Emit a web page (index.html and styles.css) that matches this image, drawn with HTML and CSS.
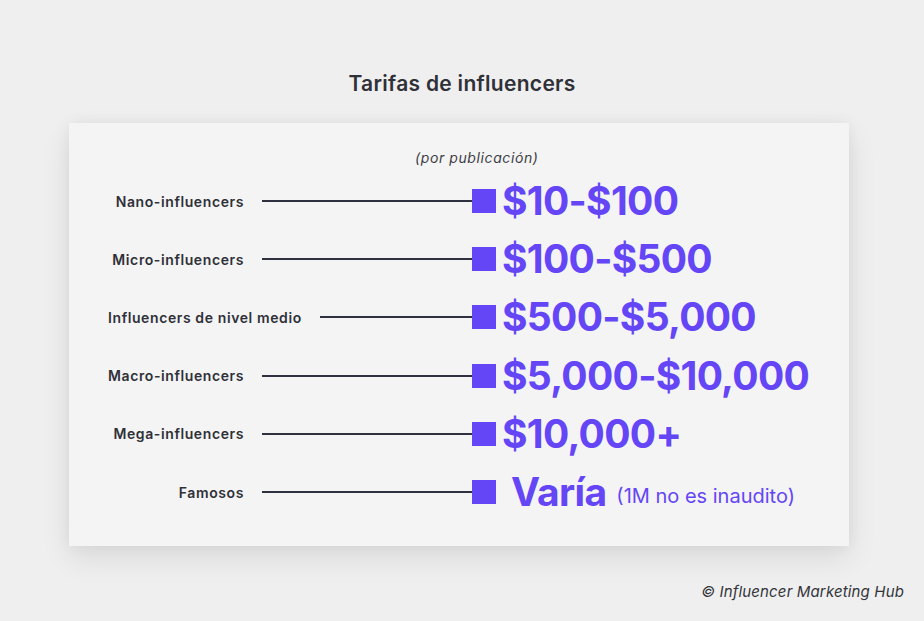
FILE: index.html
```html
<!DOCTYPE html>
<html lang="es">
<head>
<meta charset="utf-8">
<link rel="stylesheet" href="styles.css">
</head>
<body>
<div class="page">
  <h1 class="title">Tarifas de influencers</h1>
  <div class="card">
    <div class="subtitle">(por publicación)</div>
    <div class="rows">
      <div class="row"><div class="lead"><span class="label">Nano-influencers</span><span class="line"></span></div><span class="sq"></span><span class="price">$10-$100</span></div>
      <div class="row"><div class="lead"><span class="label">Micro-influencers</span><span class="line"></span></div><span class="sq"></span><span class="price">$100-$500</span></div>
      <div class="row"><div class="lead"><span class="label">Influencers de nivel medio</span><span class="line"></span></div><span class="sq"></span><span class="price">$500-$5,000</span></div>
      <div class="row"><div class="lead"><span class="label">Macro-influencers</span><span class="line"></span></div><span class="sq"></span><span class="price">$5,000-$10,000</span></div>
      <div class="row"><div class="lead"><span class="label">Mega-influencers</span><span class="line"></span></div><span class="sq"></span><span class="price">$10,000+</span></div>
      <div class="row"><div class="lead"><span class="label">Famosos</span><span class="line"></span></div><span class="sq"></span><span class="price varia">Varía</span><span class="note">(1M no es inaudito)</span></div>
    </div>
  </div>
  <div class="credit">© Influencer Marketing Hub</div>
</div>
</body>
</html>
```
FILE: styles.css
```css
html, body {
  margin: 0;
  padding: 0;
  background: #efefef;
}
body {
  font-family: Inter, "Noto Sans", sans-serif;
  color: #2f3038;
}
.page {
  width: 924px;
  height: 621px;
  display: flex;
  flex-direction: column;
  overflow: hidden;
}
.title {
  margin: 72px 0 0 0;
  height: 24px;
  line-height: 24px;
  font-size: 21px;
  font-weight: 600;
  text-align: center;
  color: #2f3038;
  letter-spacing: 0.3px;
}
.card {
  margin: 27px 0 0 69px;
  width: 780px;
  height: 423px;
  box-sizing: border-box;
  background: #f4f4f4;
  box-shadow: 0 12px 28px rgba(0, 0, 0, 0.09), 0 0 14px rgba(0, 0, 0, 0.05);
  padding: 26px 0 0 39px;
}
.subtitle {
  padding-left: 307px;
  font-size: 14px;
  line-height: 18px;
  font-style: italic;
  letter-spacing: 0.6px;
  color: #3c3d44;
}
.rows {
  margin-top: 5px;
  display: flex;
  flex-direction: column;
}
.row {
  height: 58.2px;
  display: flex;
  align-items: center;
}
.lead {
  width: 364px;
  display: flex;
  align-items: center;
}
.label {
  min-width: 136px;
  text-align: right;
  font-size: 14px;
  font-weight: 600;
  letter-spacing: 0.6px;
  color: #2f3038;
  white-space: nowrap;
  padding-right: 18px;
}
.line {
  flex: 1;
  height: 2px;
  background: #2f3040;
}
.sq {
  width: 24px;
  height: 24px;
  background: #6446f6;
  flex: none;
}
.price {
  margin-left: 6px;
  font-size: 39px;
  font-weight: 700;
  color: #6446f6;
  letter-spacing: -0.7px;
  line-height: 44px;
}
.price.varia {
  margin-left: 15px;
}
.note {
  margin-left: 10px;
  margin-top: 8px;
  font-size: 20px;
  color: #6446f6;
}
.credit {
  margin-top: 36px;
  align-self: flex-end;
  padding-right: 20px;
  font-size: 15px;
  font-style: italic;
  letter-spacing: 0.15px;
  color: #33343a;
}
```
